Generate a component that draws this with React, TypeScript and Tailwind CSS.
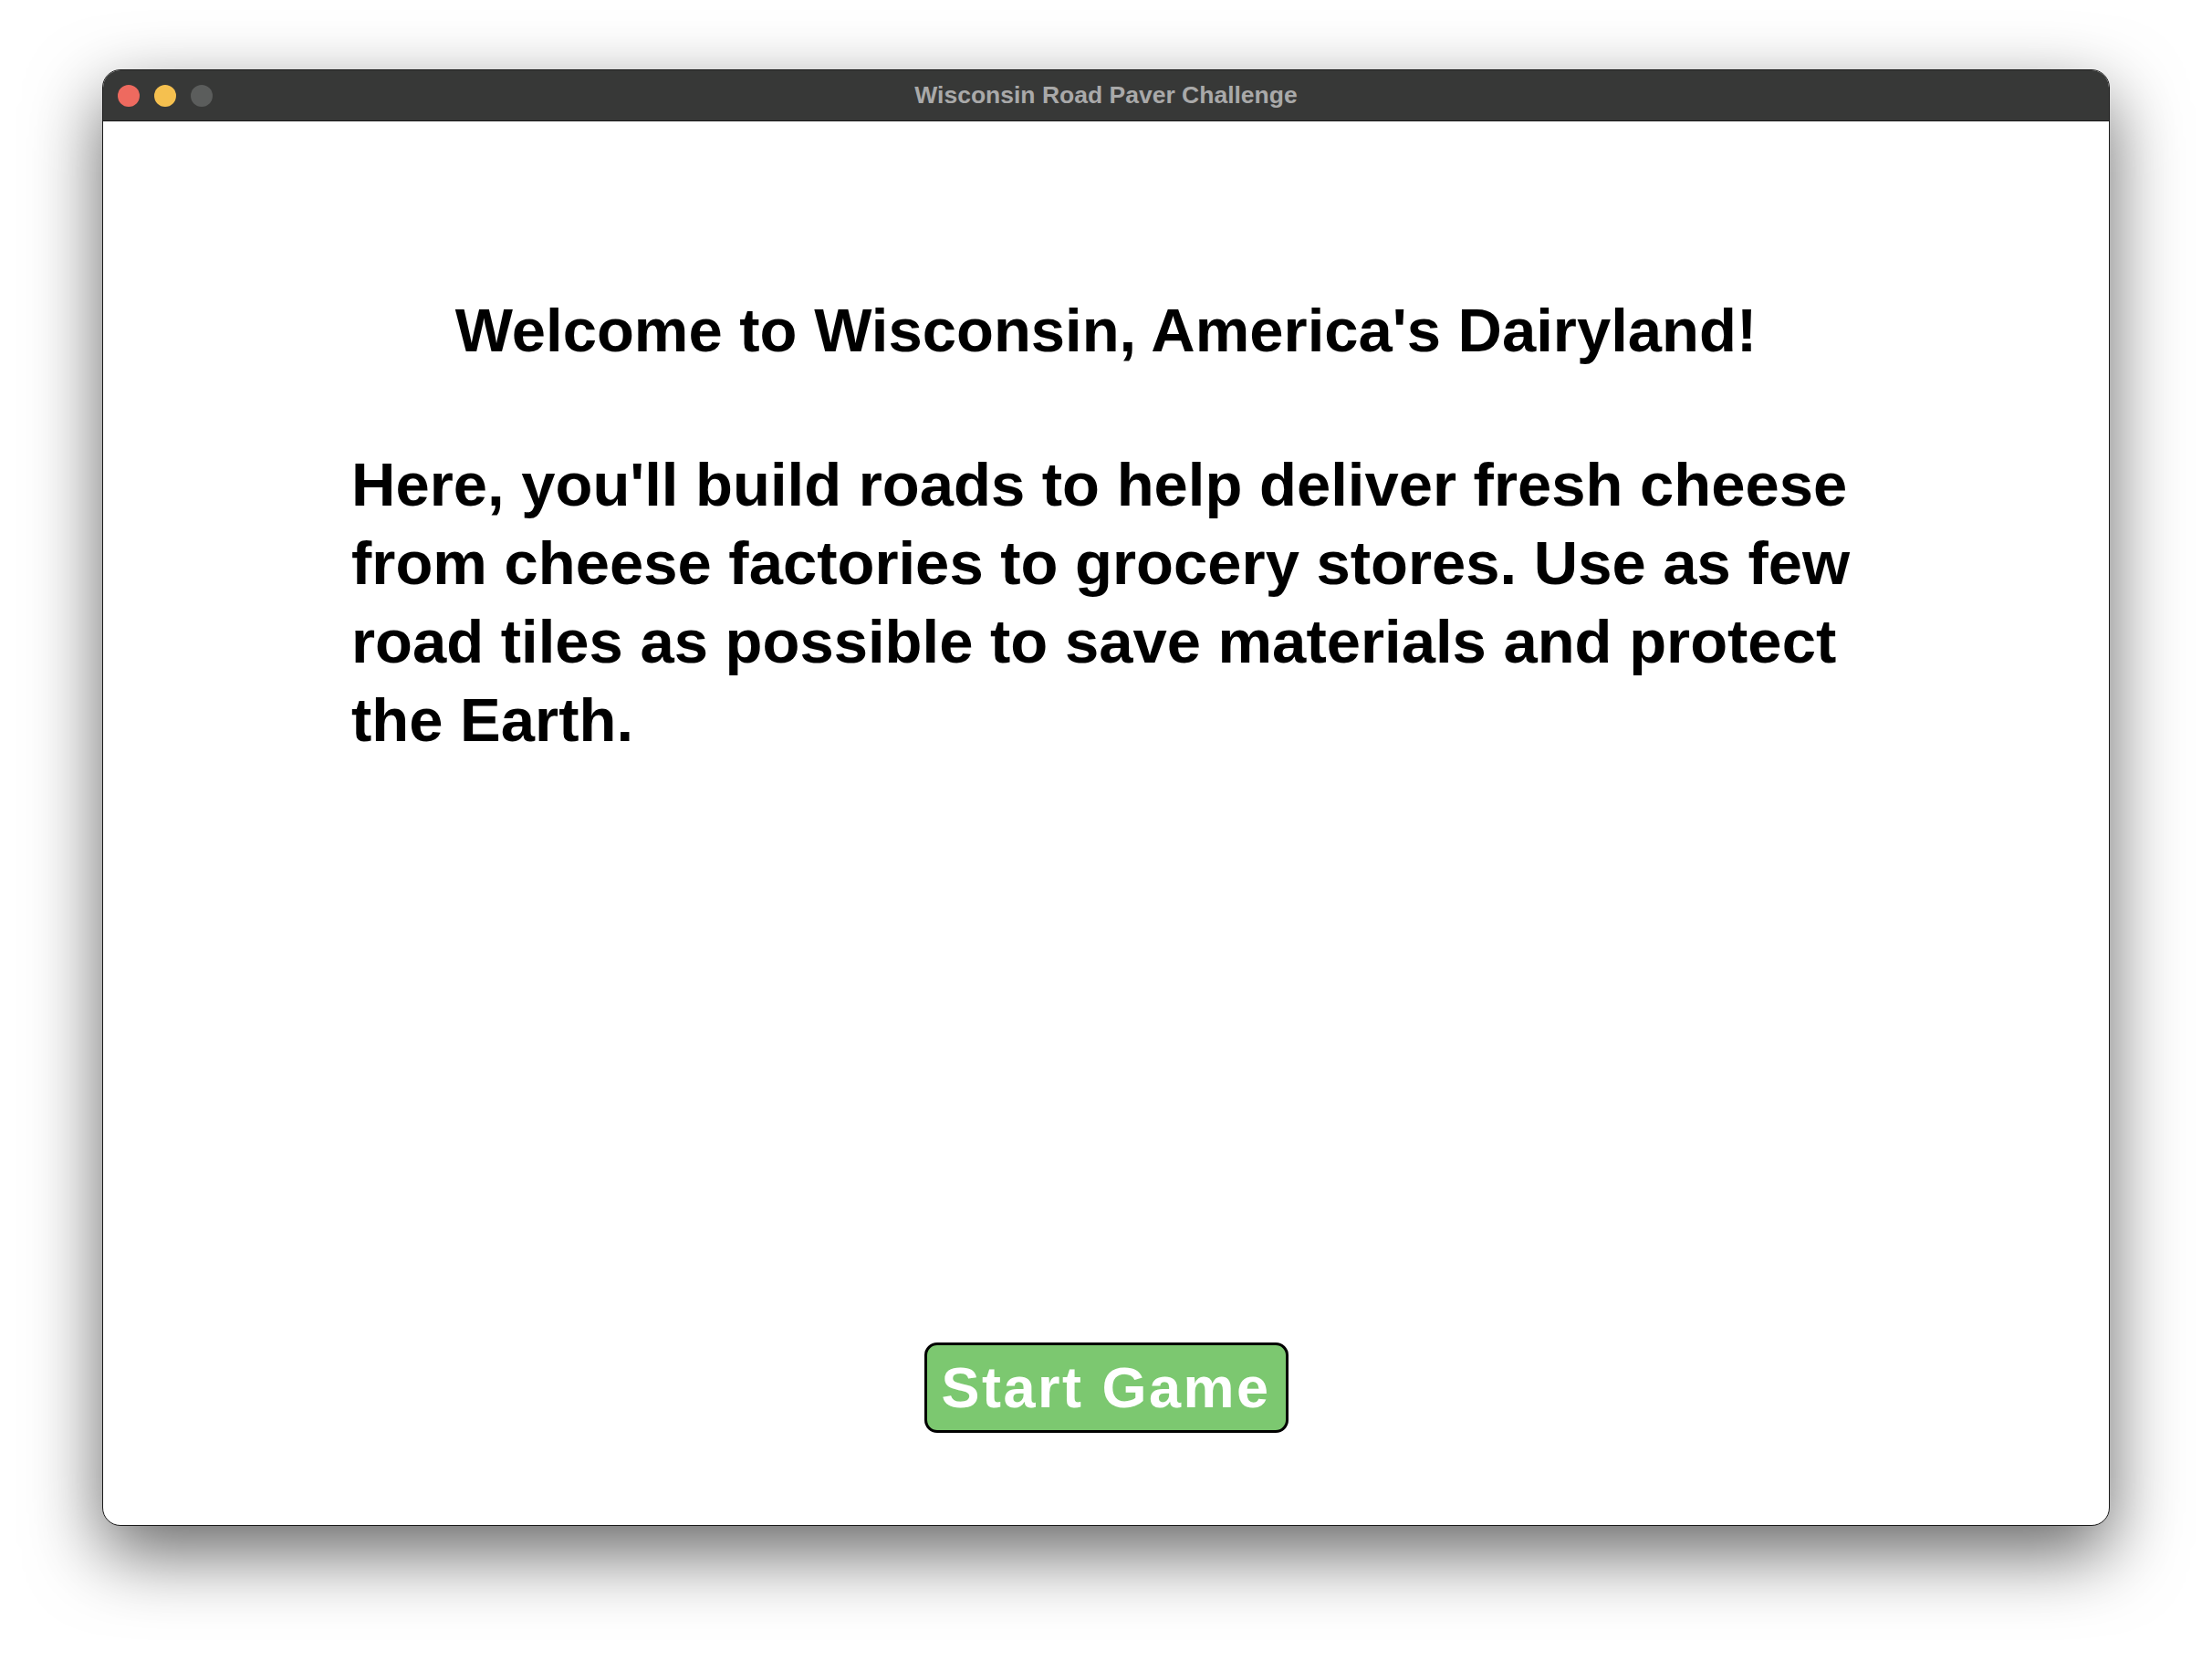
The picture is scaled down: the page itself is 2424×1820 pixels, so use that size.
import React from "react";

export default function App() {
  const font = { fontFamily: '"Liberation Sans", Arial, sans-serif' };
  return (
    <div className="w-[2424px] h-[1820px] bg-white flex justify-center pt-[76px]" style={font}>
      <div className="w-[2200px] h-[1596px] rounded-[20px] border border-[#1a1a1a] bg-white overflow-hidden flex flex-col shadow-[0_30px_80px_rgba(0,0,0,0.6)]">
        <div className="relative h-[56px] shrink-0 bg-[#373837] border-b border-[#1a1a1a] flex items-center justify-center">
          <div className="absolute left-[16px] top-[16px] flex gap-[16px]">
            <div className="w-[24px] h-[24px] rounded-full bg-[#ee6a5f]" />
            <div className="w-[24px] h-[24px] rounded-full bg-[#f5c04f]" />
            <div className="w-[24px] h-[24px] rounded-full bg-[#5b5d5c]" />
          </div>
          <div className="text-[26.5px] font-bold text-[#a9a9a9] leading-none">Wisconsin Road Paver Challenge</div>
        </div>
        <div className="flex-1 flex flex-col items-center text-black">
          <div className="mt-[195px] text-[67px] leading-[68px] font-bold">
            Welcome to Wisconsin, America's Dairyland!
          </div>
          <div className="mt-[92px] self-start ml-[272px] text-[67px] leading-[86px] font-bold">
            <div>Here, you'll build roads to help deliver fresh cheese</div>
            <div>from cheese factories to grocery stores. Use as few</div>
            <div>road tiles as possible to save materials and protect</div>
            <div>the Earth.</div>
          </div>
          <button className="mt-auto mb-[101px] w-[399px] h-[99px] rounded-[14px] border-[3px] border-black bg-[#7cc870] text-white text-[63px] font-bold leading-none flex items-center justify-center tracking-[2.5px]">
            Start Game
          </button>
        </div>
      </div>
    </div>
  );
}
